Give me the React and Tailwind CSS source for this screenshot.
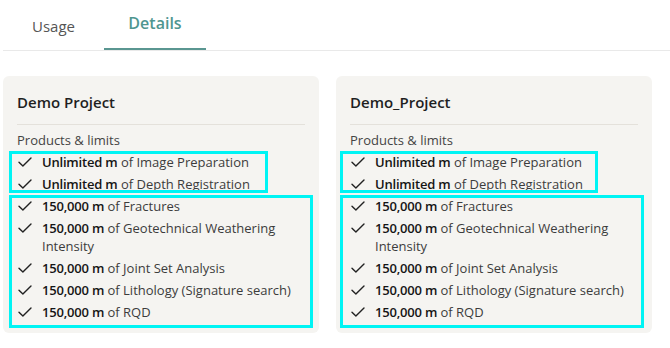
import React from 'react';

const projects = ['Demo Project', 'Demo_Project'];

const unlimited = ['Image Preparation', 'Depth Registration'];
const limited = [
    'Fractures',
    'Geotechnical Weathering Intensity',
    'Joint Set Analysis',
    'Lithology (Signature search)',
    'RQD',
];

const Check = () => (
    <svg width="14" height="10" viewBox="0 0 14 10" fill="none" className="mt-[4px] shrink-0">
        <path d="M1 5.2 4.9 9 13 1" stroke="#222" strokeWidth="1.4" strokeLinecap="round" strokeLinejoin="round" />
    </svg>
);

const Item = ({ amount, name }) => (
    <li className="flex items-start gap-[10px] pl-[1px]">
        <Check />
        <span className="leading-[18px] text-[#3c3c3c]">
            <span className="font-semibold tracking-[-0.2px] text-[#151515]">{amount}</span> of {name}
        </span>
    </li>
);

const ProjectCard = ({ title, shift }) => (
    <div className="relative w-[316px] rounded-[6px] bg-[#f5f4f1] px-[14px] pt-[14px] pb-[12px]">
        <h2 className="text-[15px] font-semibold leading-[24px] text-[#1f1f1f]">{title}</h2>
        <div className="mt-[10px] h-px bg-[#e4e1db]" />
        <p className="mt-[6px] text-[13px] leading-[18px] text-[#444]">Products &amp; limits</p>
        <ul className="mt-[4px] flex flex-col gap-[4px] text-[13px]">
            {unlimited.map((n) => <Item key={n} amount="Unlimited m" name={n} />)}
            {limited.map((n) => <Item key={n} amount="150,000 m" name={n} />)}
        </ul>
        {/* highlight frames */}
        <div className={`pointer-events-none absolute top-[75px] h-[42px] border-[3px] border-[#00f4f4] ${shift ? 'left-[4px] w-[258px]' : 'left-[6px] w-[259px]'}`} />
        <div className={`pointer-events-none absolute top-[119px] h-[133px] border-[3px] border-[#00f4f4] ${shift ? 'left-[4px] w-[304px]' : 'left-[6px] w-[304px]'}`} />
    </div>
);

const App = () => {
    return (
        <div className="min-h-[348px] bg-white pl-[3px] font-['Open_Sans',sans-serif]">
            <div className="flex h-[51px] border-b border-[#e9e9e9]">
                <button className="flex w-[101px] items-center justify-center pt-[2px] text-[15px] text-[#555]">Usage</button>
                <button className="flex w-[102px] items-center justify-center border-b-2 border-[#5a9691] pb-[2px] text-[16px] font-semibold text-[#4f9690]">Details</button>
            </div>
            <div className="mt-[25px] flex gap-[17px]">
                {projects.map((p, i) => <ProjectCard key={p} title={p} shift={i === 1} />)}
            </div>
        </div>
    );
};

export default App;
